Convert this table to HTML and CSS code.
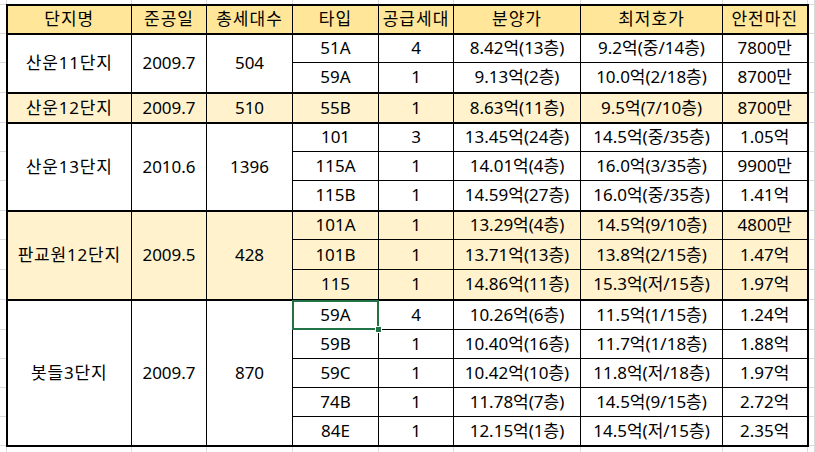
FILE: index.html
```html
<!DOCTYPE html>
<html lang="ko">
<head>
<meta charset="utf-8">
<title>단지 분양가</title>
<link rel="stylesheet" href="styles.css">
</head>
<body>
<table class="sheet">
<colgroup>
<col class="c-pad"><col class="c-a"><col class="c-b"><col class="c-c"><col class="c-d"><col class="c-e"><col class="c-f"><col class="c-g"><col class="c-h"><col class="c-pad">
</colgroup>
<tbody>
<tr class="r-top"><td class="g"></td><td class="g"></td><td class="g"></td><td class="g"></td><td class="g"></td><td class="g"></td><td class="g"></td><td class="g"></td><td class="g"></td><td class="g"></td></tr>
<tr class="r29 head"><td class="g"></td><th class="first">단지명</th><th>준공일</th><th>총세대수</th><th>타입</th><th>공급세대</th><th>분양가</th><th>최저호가</th><th class="last">안전마진</th><td class="g"></td></tr>

<tr class="r29 grp"><td class="g"></td><td class="first name" rowspan="2">산운11단지</td><td rowspan="2">2009.7</td><td rowspan="2">504</td><td>51A</td><td>4</td><td>8.42억(13층)</td><td>9.2억(중/14층)</td><td class="last">7800만</td><td class="g"></td></tr>
<tr class="r30"><td class="g"></td><td>59A</td><td>1</td><td>9.13억(2층)</td><td>10.0억(2/18층)</td><td class="last">8700만</td><td class="g"></td></tr>

<tr class="r30 grp shade"><td class="g"></td><td class="first name">산운12단지</td><td>2009.7</td><td>510</td><td>55B</td><td>1</td><td>8.63억(11층)</td><td>9.5억(7/10층)</td><td class="last">8700만</td><td class="g"></td></tr>

<tr class="r29 grp"><td class="g"></td><td class="first name" rowspan="3">산운13단지</td><td rowspan="3">2010.6</td><td rowspan="3">1396</td><td>101</td><td>3</td><td>13.45억(24층)</td><td>14.5억(중/35층)</td><td class="last">1.05억</td><td class="g"></td></tr>
<tr class="r29"><td class="g"></td><td>115A</td><td>1</td><td>14.01억(4층)</td><td>16.0억(3/35층)</td><td class="last">9900만</td><td class="g"></td></tr>
<tr class="r30"><td class="g"></td><td>115B</td><td>1</td><td>14.59억(27층)</td><td>16.0억(중/35층)</td><td class="last">1.41억</td><td class="g"></td></tr>

<tr class="r29 grp shade"><td class="g"></td><td class="first name" rowspan="3">판교원12단지</td><td rowspan="3">2009.5</td><td rowspan="3">428</td><td>101A</td><td>1</td><td>13.29억(4층)</td><td>14.5억(9/10층)</td><td class="last">4800만</td><td class="g"></td></tr>
<tr class="r30 shade"><td class="g"></td><td>101B</td><td>1</td><td>13.71억(13층)</td><td>13.8억(2/15층)</td><td class="last">1.47억</td><td class="g"></td></tr>
<tr class="r30 shade"><td class="g"></td><td>115</td><td>1</td><td>14.86억(11층)</td><td>15.3억(저/15층)</td><td class="last">1.97억</td><td class="g"></td></tr>

<tr class="r30 grp"><td class="g"></td><td class="first name bottom" rowspan="5">봇들3단지</td><td class="bottom" rowspan="5">2009.7</td><td class="bottom" rowspan="5">870</td><td class="sel">59A<span class="selbox"></span><span class="handle"></span></td><td>4</td><td>10.26억(6층)</td><td>11.5억(1/15층)</td><td class="last">1.24억</td><td class="g"></td></tr>
<tr class="r29"><td class="g"></td><td>59B</td><td>1</td><td>10.40억(16층)</td><td>11.7억(1/18층)</td><td class="last">1.88억</td><td class="g"></td></tr>
<tr class="r29"><td class="g"></td><td>59C</td><td>1</td><td>10.42억(10층)</td><td>11.8억(저/18층)</td><td class="last">1.97억</td><td class="g"></td></tr>
<tr class="r29"><td class="g"></td><td>74B</td><td>1</td><td>11.78억(7층)</td><td>14.5억(9/15층)</td><td class="last">2.72억</td><td class="g"></td></tr>
<tr class="r29 end"><td class="g"></td><td>84E</td><td>1</td><td>12.15억(1층)</td><td>14.5억(저/15층)</td><td class="last">2.35억</td><td class="g"></td></tr>

<tr class="r-bot"><td class="g"></td><td class="g"></td><td class="g"></td><td class="g"></td><td class="g"></td><td class="g"></td><td class="g"></td><td class="g"></td><td class="g"></td><td class="g"></td></tr>
</tbody>
</table>
</body>
</html>
```

FILE: styles.css
```css
html, body {
  margin: 0;
  padding: 0;
  background: #ffffff;
}
body {
  width: 815px;
  height: 452px;
  overflow: hidden;
  font-family: "Noto Sans", "Noto Sans CJK KR", sans-serif;
  font-size: 17px;
  color: #000;
}
.sheet {
  border-collapse: collapse;
  table-layout: fixed;
  width: 815px;
  margin-top: -1px;
  margin-left: -1px;
}
.c-pad { width: 7px; }
.c-a { width: 125px; }
.c-b { width: 75px; }
.c-c { width: 86px; }
.c-d { width: 86px; }
.c-e { width: 75px; }
.c-f { width: 127px; }
.c-g { width: 142px; }
.c-h { width: 85px; }

.sheet td, .sheet th {
  padding: 0;
  text-align: center;
  vertical-align: middle;
  font-weight: normal;
  line-height: 20px;
  white-space: nowrap;
  border: 1px solid #000;
}
.sheet td.g {
  border: 1px solid #dadada;
  background: #fff;
}
.r-top { height: 5px; }
.r-bot { height: 7px; }
.r29 { height: 29px; }
.r30 { height: 30px; }

.head th {
  background: #ffe699;
  border-top: 2px solid #000;
  border-bottom: 2px solid #000;
  letter-spacing: 1px;
}
.sheet td.name { letter-spacing: 0.8px; }
.grp td:not(.g) { border-top: 2px solid #000; }
.shade td:not(.g) { background: #fff2cc; }
.sheet .first { border-left: 2px solid #000; }
.sheet .last { border-right: 2px solid #000; }
.end td:not(.g), .sheet td.bottom { border-bottom: 2px solid #000; }

.sel { position: relative; }
.selbox {
  position: absolute;
  left: -1px;
  top: -1px;
  right: -1px;
  bottom: -1px;
  border: 2px solid #217346;
}
.handle {
  position: absolute;
  right: -4px;
  bottom: -4px;
  width: 5px;
  height: 5px;
  background: #217346;
  border: 1px solid #fff;
}
```
